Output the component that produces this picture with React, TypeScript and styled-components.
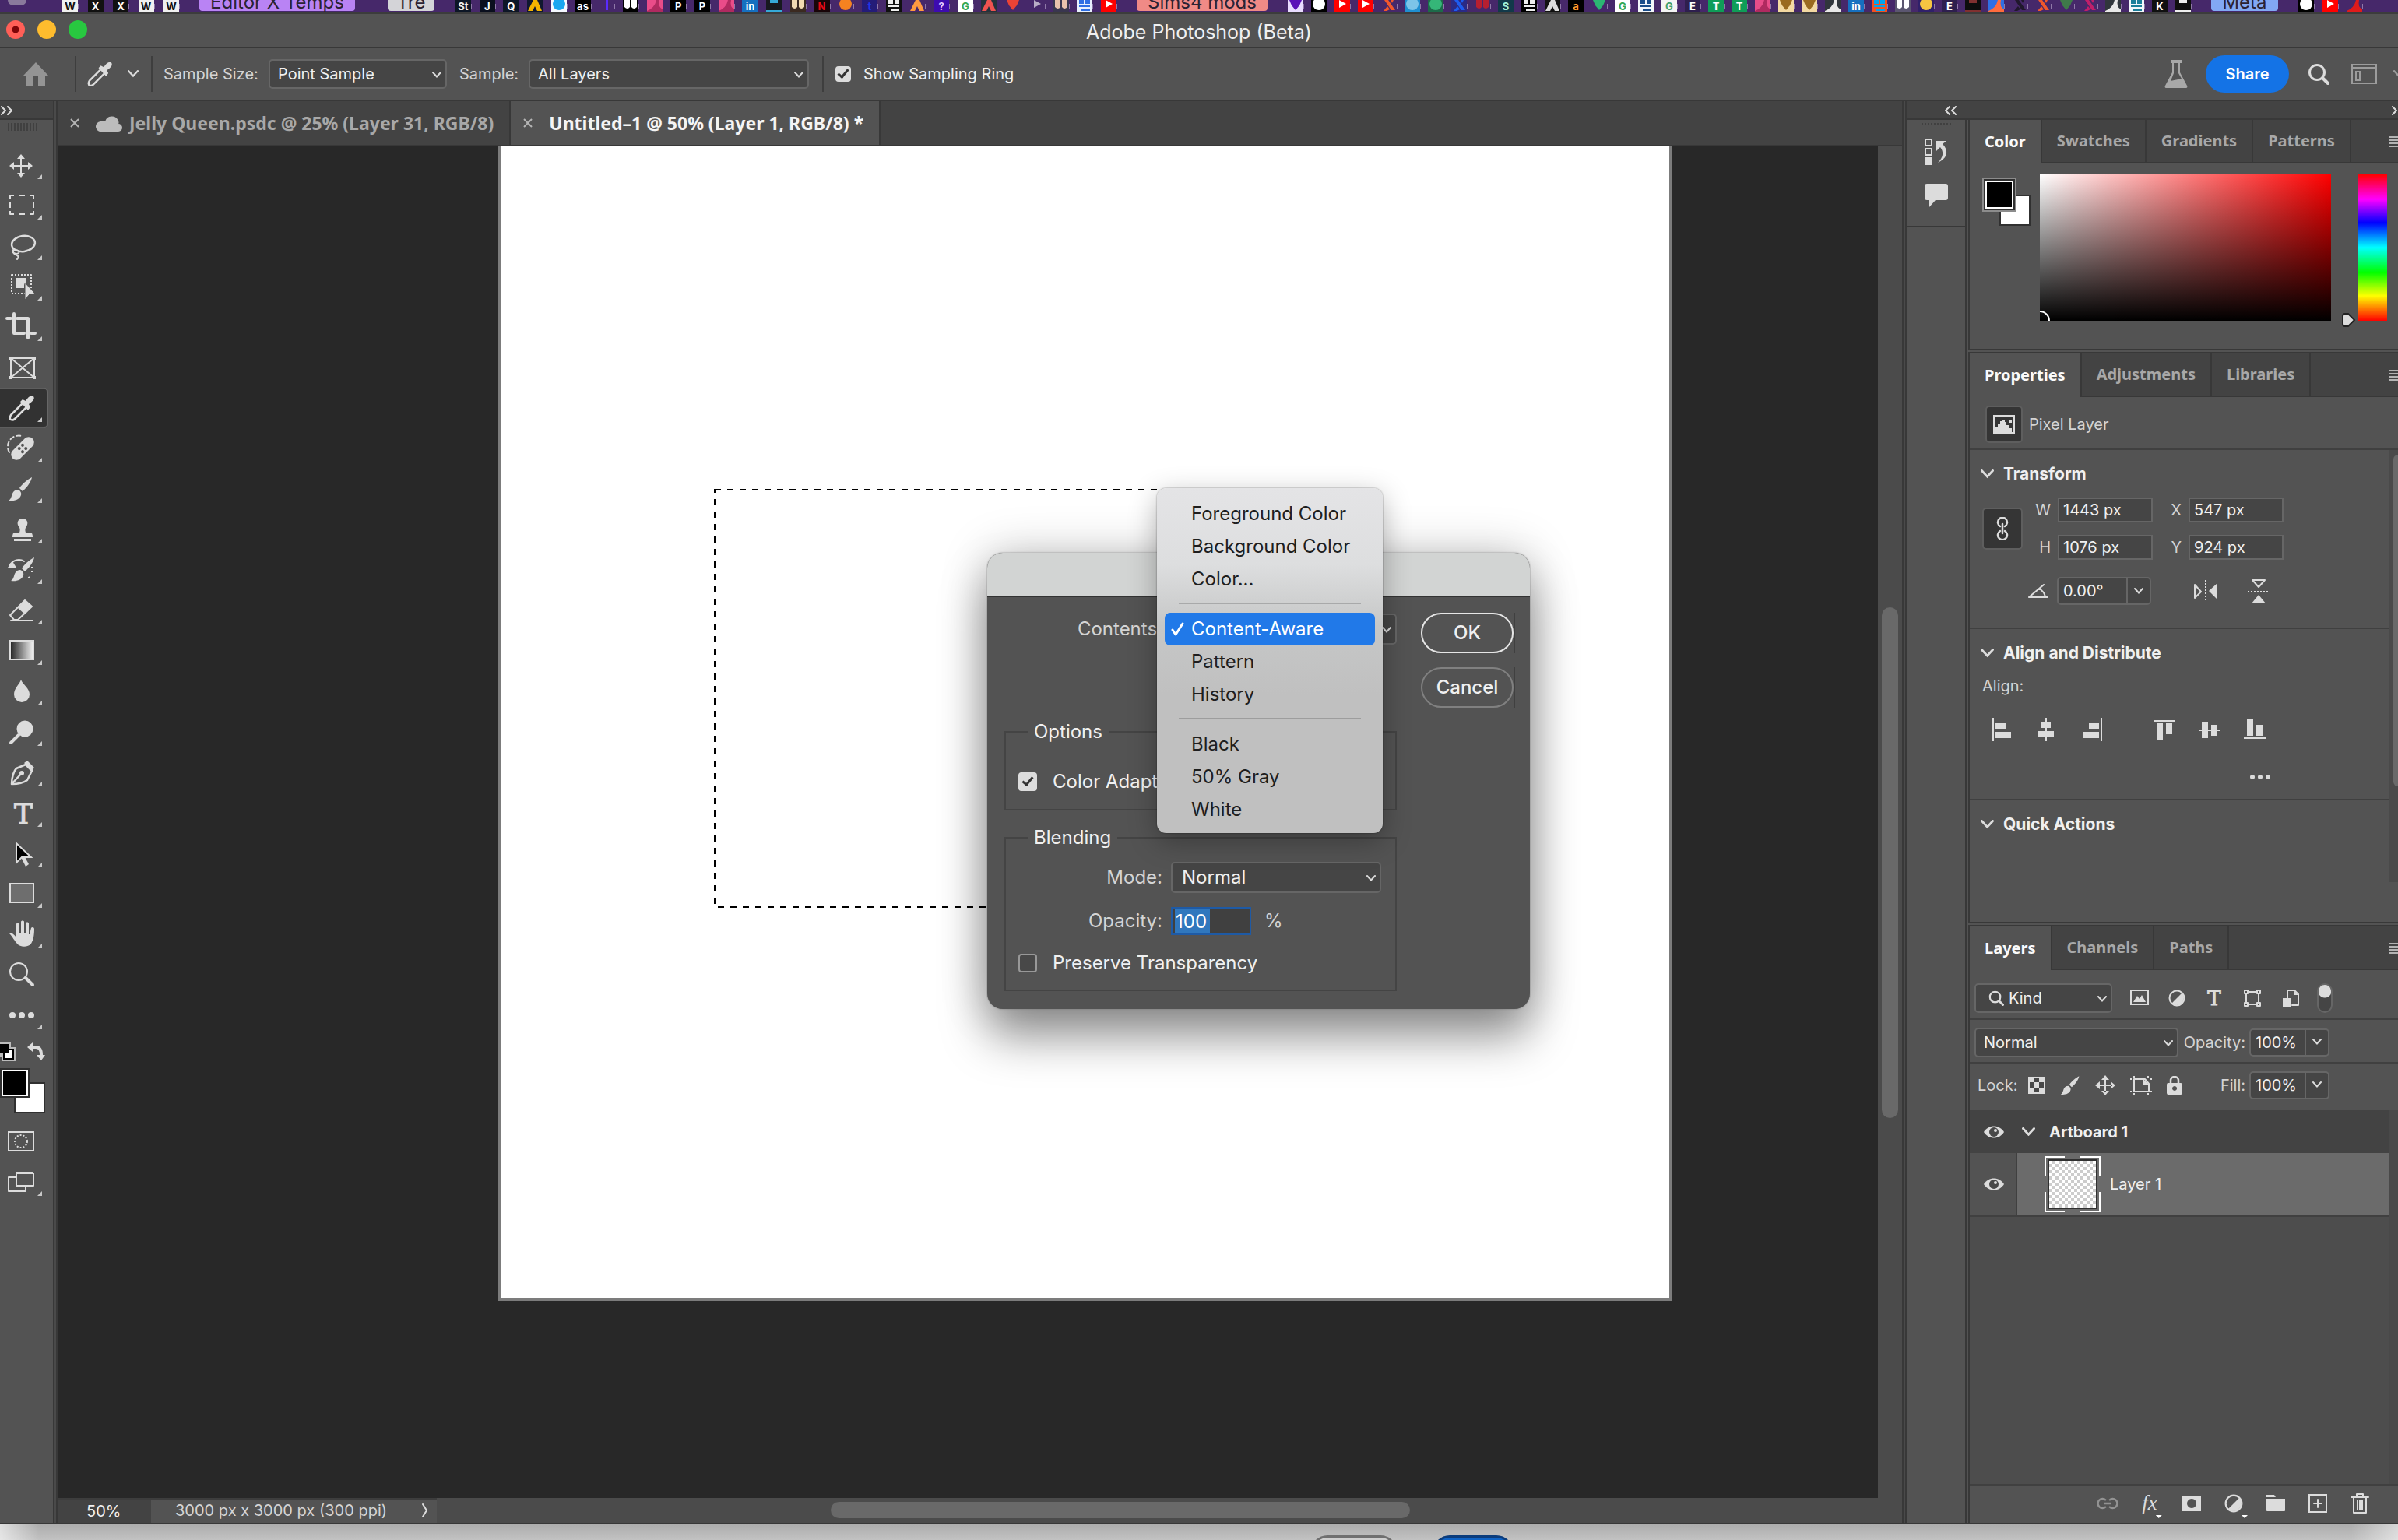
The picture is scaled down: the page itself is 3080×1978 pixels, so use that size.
import React from 'react';
import styled, { createGlobalStyle, css } from 'styled-components';

const sans = `Inter, "Liberation Sans", sans-serif`;
const tabFont = `"Noto Sans", "Open Sans", sans-serif`;

const c = {
  bar: '#535353',
  dark: '#434343',
  line: '#383838',
  field: '#454545',
  edge: '#666666',
  icon: '#dcdcdc',
  text: '#f0f0f0',
  soft: '#d4d4d4',
  dim: '#a8a8a8',
};

const Global = createGlobalStyle`
  *, *::before, *::after { box-sizing: border-box; }
  body { margin: 0; overflow: hidden; background: #b6b6b6; }
  button, input, select { font: inherit; color: inherit; margin: 0; }
  button { background: none; border: 0; padding: 0; display: block; }
  svg { display: block; flex: none; }
  fieldset, ul { margin: 0; padding: 0; }
`;

const Screen = styled.div`
  position: relative;
  display: flex;
  flex-direction: column;
  height: 100vh;
  overflow: hidden;
  font-family: ${sans};
  font-size: 20px;
  line-height: 26px;
  color: ${c.text};
`;

/* ---------- bookmark strip ---------- */
const Strip = styled.div`
  display: flex;
  height: 16px;
  flex: none;
  overflow: hidden;
  background: #46286a;
`;
const FavGroup = styled.div<{ $w: number; $gap: number }>`
  display: flex;
  justify-content: space-between;
  width: ${p => p.$w}px;
  margin-left: ${p => p.$gap}px;
  flex: none;
`;
const Fav = styled.div<{ $bg: string; $fg: string }>`
  width: 20px;
  height: 16px;
  background: ${p => p.$bg};
  color: ${p => p.$fg};
  font-weight: 700;
  font-size: 13px;
  line-height: 16px;
  text-align: center;
  box-shadow: 6px 0 0 -5px #8f79a8;
`;
const Folder = styled.div<{ $bg: string; $w: number; $gap: number }>`
  width: ${p => p.$w}px;
  margin-left: ${p => p.$gap}px;
  flex: none;
  height: 14px;
  border-radius: 0 0 4px 4px;
  background: ${p => p.$bg};
  color: #2b2233;
  font-size: 24px;
  line-height: 5px;
  text-align: center;
`;
const AvatarTip = styled.div`
  width: 24px;
  height: 7px;
  flex: none;
  margin-left: 10px;
  border-radius: 0 0 12px 12px;
  background: #8a7a9c;
`;

type F = [string, string, string];
const favA: F[] = [
  ['#f0f0f0', '#111', 'W'], ['#111', '#fff', 'X'], ['#111', '#fff', 'X'], ['#f0f0f0', '#111', 'W'], ['#f0f0f0', '#111', 'W'],
];
const favB: F[] = [
  ['#0d1626', '#eee', 'St'], ['#0a0f1e', '#fff', 'J'], ['#0d1626', '#fff', 'Q'], ['#101830', '#f4b400', 'tri'], ['#f5f9ff', '#1aa7f0', 'dot'],
  ['#000', '#fff', 'as'], ['#46286a', '#5a2bff', 'stem'], ['#000', '#fff', 'pair'], ['#e94c89', '#b02a60', 'wave'], ['#000', '#fff', 'P'],
  ['#000', '#fff', 'P'], ['#e94c89', '#b02a60', 'wave'], ['#1670c0', '#fff', 'in'], ['#17191f', '#35a9d8', 'base'], ['#3b2a20', '#f1d9b0', 'pair'],
  ['#180508', '#e50914', 'N'], ['#46286a', '#f58220', 'dot'], ['#241c78', '#1f35e8', 't'], ['#101010', '#eee', 'grid'], ['#46286a', '#ff9940', 'tri'],
  ['#3d0bb0', '#e6c9ff', '?'], ['#fff', '#34a853', 'G'], ['#25323c', '#ef5350', 'tri'], ['#46286a', '#ea4335', 'drop'], ['#46286a', '#b9adc6', 'play'],
  ['#39364f', '#e9c2ad', 'pair'], ['#e8f0fe', '#2f6fe4', 'grid'], ['#f00', '#fff', 'play'],
];
const favC: F[] = [
  ['#e9dcff', '#5a11b8', 'drop'], ['#000', '#fff', 'dot'], ['#f00', '#fff', 'play'], ['#f00', '#fff', 'play'], ['#46286a', '#f2572b', 'cross'],
  ['#1f8fd0', '#7cc4e8', 'dot'], ['#1d6b4a', '#35b678', 'dot'], ['#2a2a86', '#1d5cf0', 'cross'], ['#46286a', '#b81f30', 'pair'], ['#12394a', '#9ff0d8', 'S'],
  ['#000', '#eee', 'grid'], ['#111', '#ddd', 'tri'], ['#000', '#ff9d2e', 'a'], ['#46286a', '#2bb673', 'drop'], ['#fff', '#34a853', 'G'],
  ['#f2f6fa', '#1b4e8a', 'grid'], ['#f4f4f4', '#42a070', 'G'], ['#2e1f4e', '#fff', 'E'], ['#0f9d58', '#fff', 'T'], ['#0f9d58', '#fff', 'T'],
  ['#e94c89', '#b02a60', 'wave'], ['#f3d9a2', '#9a6a20', 'drop'], ['#f3d9a2', '#9a6a20', 'drop'], ['#30363c', '#e8e8e8', 'wave'], ['#1670c0', '#fff', 'in'],
  ['#f25022', '#00a4ef', 'grid'], ['#5b5670', '#fff', 'pair'], ['#30206a', '#f5c542', 'dot'], ['#2e1f4e', '#fff', 'E'], ['#0d0d0d', '#803030', 'base'],
  ['#2f6fe4', '#ff6b3d', 'wave'], ['#46286a', '#20182c', 'cross'], ['#46286a', '#f2572b', 'cross'], ['#46286a', '#3f7a4a', 'drop'], ['#46286a', '#c01f6a', 'cross'],
  ['#30363c', '#e8e8e8', 'wave'], ['#f2f6fa', '#1b7e9a', 'grid'], ['#101010', '#fff', 'K'], ['#101010', '#eee', 'base'],
];
const favD: F[] = [['#000', '#fff', 'dot'], ['#f00', '#fff', 'play'], ['#46286a', '#e01b1b', 'wave']];

const shapes: Record<string, React.ReactNode> = {
  tri: <path d="M8 0h5l6 14h-6l-3-6-3 6H1z" />,
  dot: <circle cx="10" cy="5" r="8" />,
  play: <path d="M6 0L15 5L6 10z" />,
  wave: <path d="M0 14Q10 10 12 0h4Q14 9 20 12V16H0z" />,
  stem: <path d="M9 0h3v13H9z" />,
  pair: <path d="M2 0h7v9q-3 4-7 0zM11 0h7v9q-4 4-7 0z" />,
  base: <path d="M0 13h20v3H0zM5 0h10v4H5z" />,
  grid: <path d="M3 0h6v5H3zM11 0h6v5h-6zM3 7h14v2H3zM6 11h11v3H6z" />,
  drop: <path d="M2 0h16l-3 7-5 6-5-6z" />,
  cross: <path d="M4 0h5l9 13h-5zM12 0h4l-2 4zM8 8l3 4-4 2H3z" />,
};
const Favs = ({ items }: { items: F[] }) => (
  <>
    {items.map(([bg, fg, g], i) => (
      <Fav key={i} $bg={bg} $fg={fg}>
        {shapes[g] ? <svg width="20" height="16" fill={fg}>{shapes[g]}</svg> : g}
      </Fav>
    ))}
  </>
);

/* ---------- window frame ---------- */
const Frame = styled.div`
  flex: 1;
  min-height: 0;
  display: flex;
  flex-direction: column;
  background: ${c.bar};
  border-top: 2px solid #3c3c3c;
  border-bottom: 2px solid ${c.line};
`;
const TitleBar = styled.header`
  position: relative;
  display: flex;
  align-items: center;
  justify-content: center;
  height: 44px;
  flex: none;
  padding-top: 3px;
  border-bottom: 2px solid ${c.line};
  font-size: 25px;
`;
const Lights = styled.div`
  position: absolute;
  left: 8px;
  top: 8px;
  display: flex;
  gap: 16px;
`;
const Light = styled.button<{ $c: string; $dot?: boolean }>`
  width: 24px;
  height: 24px;
  border-radius: 50%;
  background: ${p => p.$c};
  ${p => p.$dot && css`background: radial-gradient(circle, #7e0508 0 4px, ${p.$c} 5px);`}
`;

const OptionsBar = styled.div`
  display: flex;
  align-items: center;
  height: 68px;
  flex: none;
  padding-left: 30px;
  border-bottom: 2px solid ${c.line};
`;
const VLine = styled.i<{ $l: number; $r: number }>`
  width: 2px;
  height: 46px;
  margin: 0 ${p => p.$r}px 0 ${p => p.$l}px;
  background: #3e3e3e;
`;
const ToolPick = styled.button`
  display: flex;
  align-items: center;
  gap: 20px;
`;
const OptLabel = styled.label<{ $w: number; $l?: number }>`
  width: ${p => p.$w}px;
  padding-left: ${p => p.$l ?? 0}px;
  color: ${c.soft};
`;
const SelectBox = styled.span<{ $w?: number; $h?: number }>`
  position: relative;
  display: block;
  flex: none;
  width: ${p => p.$w}px;
  height: ${p => p.$h ?? 38}px;
  svg { position: absolute; right: 7px; top: 50%; margin-top: -3px; pointer-events: none; }
`;
const Select = styled.select<{ $pad?: number }>`
  appearance: none;
  width: 100%;
  height: 100%;
  padding: 0 0 0 ${p => p.$pad ?? 14}px;
  background: ${c.field};
  border: 2px solid ${c.edge};
  border-radius: 5px;
  color: ${c.text};
  outline: none;
`;
const Check = styled.label<{ $gap: number }>`
  display: flex;
  align-items: center;
  gap: ${p => p.$gap}px;
  white-space: nowrap;
  color: ${c.text};
`;
const Box = styled.input<{ $s: number }>`
  appearance: none;
  flex: none;
  width: ${p => p.$s}px;
  height: ${p => p.$s}px;
  border: 2px solid #989898;
  border-radius: 4px;
  background: #484848;
  display: grid;
  place-items: center;
  &:checked { background: #dcdcdc; border-color: #dcdcdc; }
  &:checked::before {
    content: '';
    width: 8px;
    height: 14px;
    margin-top: -4px;
    border: solid #333;
    border-width: 0 3px 3px 0;
    transform: rotate(40deg);
  }
`;
const OptRight = styled.div`
  display: flex;
  align-items: center;
  margin-left: auto;
`;
const Share = styled.button`
  width: 107px;
  height: 48px;
  margin: 0 24px 0 23px;
  border-radius: 24px;
  background: #1473e6;
  color: #fff;
  font-weight: 600;
`;
const WorkspaceButton = styled.button`
  margin-left: 28px;
`;
const Clipped = styled.span`
  width: 6px;
  margin-left: 21px;
  overflow: hidden;
`;

const Chevron = ({ s = 12, color = c.icon }: { s?: number; color?: string }) => (
  <svg width={s} height={s * 0.67} viewBox="0 0 12 8" fill="none" stroke={color} strokeWidth="2" strokeLinecap="round"><path d="M1 1 L6 6.5 L11 1" /></svg>
);

const Dropdown = ({ id, w, h, pad, value, options = [] }: { id: string; w: number; h?: number; pad?: number; value: string; options?: string[] }) => (
  <SelectBox $w={w} $h={h}>
    <Select id={id} $pad={pad} defaultValue={value}>
      {[value, ...options].map(o => <option key={o}>{o}</option>)}
    </Select>
    <Chevron />
  </SelectBox>
);

/* ---------- work area ---------- */
const Work = styled.div`
  flex: 1;
  min-height: 0;
  display: flex;
`;
const Tools = styled.nav`
  width: 74px;
  flex: none;
  border-right: 2px solid ${c.line};
  box-shadow: inset -2px 0 #4a4a4a, inset -4px 0 ${c.line};
  display: flex;
  flex-direction: column;
`;
const ToolsHead = styled.div`
  height: 24px;
  width: 68px;
  padding: 6px 0 0 1px;
  background: ${c.dark};
  border-bottom: 2px solid ${c.line};
`;
const Grip = styled.div<{ $l: number; $b: number }>`
  width: 40px;
  height: 10px;
  margin: 4px 0 ${p => p.$b}px ${p => p.$l}px;
  background: repeating-linear-gradient(90deg, #404040 0 2px, transparent 2px 4px);
`;
const Tool = styled.button<{ $on?: boolean; $sub?: boolean }>`
  position: relative;
  width: 62px;
  height: 52px;
  padding: 4px 6px;
  ${p => p.$on && css`
    background: #323232;
    box-shadow: inset -2px 0 #666, inset 0 2px #5e5e5e, inset 0 -2px #5e5e5e;
    border-radius: 0 5px 5px 0;
  `}
  ${p => p.$sub && css`
    &::after {
      content: '';
      position: absolute;
      right: 8px;
      bottom: 8px;
      width: 6px;
      height: 6px;
      background: #c8c8c8;
      clip-path: polygon(100% 0, 100% 100%, 0 100%);
    }
  `}
`;
const SwapRow = styled.div`
  display: flex;
  justify-content: space-between;
  width: 58px;
  height: 26px;
  margin: 9px 0 7px;
`;
const Swatches = styled.div<{ $s: number; $o: number; $mt?: number }>`
  position: relative;
  width: ${p => p.$s + p.$o}px;
  height: ${p => p.$s + p.$o}px;
  margin-top: ${p => p.$mt ?? 0}px;
  flex: none;
`;
const Swatch = styled.button<{ $s: number; $back?: boolean; $ring?: boolean }>`
  position: absolute;
  width: ${p => p.$s}px;
  height: ${p => p.$s}px;
  border: 2px solid #303030;
  ${p => p.$back
    ? css`right: 0; bottom: 0; background: #fff;`
    : css`left: 0; top: 0; background: #000; box-shadow: inset 0 0 0 2px #fff;`}
  ${p => p.$ring && css`outline: 2px solid #8c8c8c;`}
`;
const ModeTools = styled.div`
  margin-top: 10px;
`;

const Doc = styled.main`
  flex: 1;
  min-width: 0;
  display: flex;
  flex-direction: column;
`;
const DocTabs = styled.div`
  display: flex;
  height: 58px;
  flex: none;
  background: ${c.dark};
  border-bottom: 2px solid ${c.line};
  font: 700 23px/28px ${tabFont};
`;
const DocTab = styled.div<{ $on?: boolean }>`
  display: flex;
  align-items: center;
  gap: 21px;
  padding: 0 20px 0 16px;
  border-right: 2px solid ${c.line};
  color: ${p => (p.$on ? '#f4f4f4' : c.dim)};
  background: ${p => (p.$on ? c.bar : 'transparent')};
  white-space: nowrap;
`;
const DocName = styled.button`
  display: flex;
  align-items: center;
  gap: 9px;
`;
const View = styled.div`
  flex: 1;
  min-height: 0;
  display: flex;
`;
const Canvas = styled.div`
  position: relative;
  flex: 1;
  min-width: 0;
  overflow: hidden;
  background: #282828;
`;
const Artboard = styled.div`
  position: absolute;
  left: 566px;
  top: 0;
  width: 1508px;
  height: 1483px;
  background: #fff;
  border: solid #7c7c7c;
  border-width: 0 4px 4px 3px;
`;
const Ants = styled.svg`
  position: absolute;
  left: 843px;
  top: 440px;
`;
const VScroll = styled.div`
  width: 31px;
  padding: 592px 5px 0;
  background: #4b4b4b;
`;
const VThumb = styled.div`
  height: 656px;
  border-radius: 11px;
  background: #696969;
`;
const Status = styled.footer`
  display: flex;
  height: 32px;
  flex: none;
  background: #4b4b4b;
`;
const Zoom = styled.div`
  width: 120px;
  padding: 2px 0 0 37px;
  background: ${c.dark};
  border-top: 2px solid #3d3d3d;
`;
const DocSize = styled.button`
  display: flex;
  align-items: center;
  justify-content: space-between;
  width: 367px;
  padding: 0 11px 2px 31px;
  border-top: 2px solid #3d3d3d;
  background: ${c.bar};
  color: ${c.soft};
`;
const HTrack = styled.div`
  flex: 1;
  padding: 5px 0 0 506px;
`;
const HThumb = styled.div`
  width: 744px;
  height: 21px;
  border-radius: 11px;
  background: #696969;
`;

/* ---------- right side ---------- */
const Side = styled.aside`
  width: 637px;
  flex: none;
  display: flex;
  flex-direction: column;
  border-left: 2px solid ${c.line};
  box-shadow: inset 2px 0 #4a4a4a, inset 4px 0 ${c.line};
  padding-left: 5px;
`;
const SideHead = styled.div`
  display: flex;
  justify-content: space-between;
  height: 24px;
  flex: none;
  padding: 6px 0 0 48px;
  background: ${c.dark};
  border-bottom: 2px solid ${c.line};
`;
const SideBody = styled.div`
  flex: 1;
  min-height: 0;
  display: flex;
`;
const Dock = styled.div`
  width: 76px;
  flex: none;
  border-right: 2px solid ${c.line};
`;
const DockGroup = styled.div`
  display: flex;
  flex-direction: column;
  height: 138px;
  border-bottom: 2px solid ${c.line};
`;
const DockButton = styled.button`
  padding: 0 0 0 21px;
  margin-bottom: 24px;
`;
const Panels = styled.div`
  flex: 1;
  min-width: 0;
  display: flex;
  flex-direction: column;
  gap: 2px;
  margin-left: 2px;
`;
const Panel = styled.section<{ $h?: number }>`
  display: flex;
  flex-direction: column;
  ${p => (p.$h ? css`height: ${p.$h}px; flex: none; border-bottom: 2px solid ${c.line};` : css`flex: 1; min-height: 0;`)}
  border-left: 2px solid ${c.line};
  & + & { border-top: 2px solid ${c.line}; }
`;
const TabBar = styled.div`
  display: flex;
  height: 56px;
  flex: none;
  font: 700 20px/26px ${tabFont};
`;
const PanelTab = styled.button<{ $on?: boolean }>`
  padding: 0 19px;
  color: ${p => (p.$on ? '#fafafa' : c.dim)};
  background: ${p => (p.$on ? 'transparent' : c.dark)};
  border-right: 2px solid ${c.line};
  border-bottom: ${p => (p.$on ? 'none' : `2px solid ${c.line}`)};
`;
const TabRest = styled.div`
  flex: 1;
  display: flex;
  justify-content: flex-end;
  padding-top: 21px;
  background: ${c.dark};
  border-bottom: 2px solid ${c.line};
`;
const Burger = () => (
  <svg width="12" height="16" fill="#b4b4b4"><path d="M0 0h12v2H0zM0 4h12v2H0zM0 8h12v2H0zM0 12h12v2H0z" /></svg>
);
const Tabs = ({ names }: { names: string[] }) => (
  <TabBar role="tablist">
    {names.map((n, i) => <PanelTab key={n} role="tab" aria-selected={i === 0} $on={i === 0}>{n}</PanelTab>)}
    <TabRest><Burger /></TabRest>
  </TabBar>
);

const ColorBody = styled.div`
  display: flex;
  padding: 14px 0 0 18px;
`;
const Field = styled.div`
  position: relative;
  flex: 1;
  height: 188px;
  margin-left: 12px;
  overflow: hidden;
  background: linear-gradient(to top, #000, transparent), linear-gradient(to right, #fff, #f00);
`;
const FieldRing = styled.i`
  position: absolute;
  left: -13px;
  bottom: -13px;
  width: 26px;
  height: 26px;
  border: 2px solid #fff;
  border-radius: 50%;
`;
const HueWrap = styled.div`
  position: relative;
  width: 38px;
  height: 188px;
  margin: 0 14px 0 34px;
  background: linear-gradient(#f00, #f0f 17%, #00f 33%, #0ff 50%, #0f0 67%, #ff0 83%, #f00);
  svg { position: absolute; left: -21px; bottom: -9px; }
`;

const PropHead = styled.div`
  display: flex;
  align-items: center;
  gap: 8px;
  height: 68px;
  flex: none;
  padding: 4px 0 0 20px;
  color: ${c.soft};
  border-bottom: 2px solid #404040;
`;
const Inset = styled.button<{ $h: number; $w: number }>`
  display: grid;
  place-items: center;
  width: ${p => p.$w}px;
  height: ${p => p.$h}px;
  background: #353535;
  border: 2px solid #5e5e5e;
  border-radius: 5px;
`;
const PropScroll = styled.div`
  flex: 1;
  display: flex;
  min-height: 0;
`;
const PropList = styled.div`
  flex: 1;
`;
const PropTrack = styled.div`
  width: 12px;
  height: 555px;
  padding: 6px 0 0 6px;
  background: #4a4a4a;
`;
const PropThumb = styled.div`
  height: 426px;
  background: #696969;
  border-radius: 6px 0 0 6px;
`;
const Group = styled.div<{ $h?: number }>`
  height: ${p => (p.$h ? `${p.$h}px` : 'auto')};
  padding: 18px 0 0 14px;
  border-bottom: ${p => (p.$h ? '2px solid #404040' : 'none')};
`;
const GroupHead = styled.button`
  display: flex;
  align-items: center;
  gap: 12px;
  font-size: 21px;
  font-weight: 700;
`;
const XForm = styled.div`
  display: flex;
  align-items: center;
  margin: 17px 0 0 2px;
`;
const XGrid = styled.div`
  display: grid;
  grid-template-columns: 36px 122px 28px 122px;
  column-gap: 9px;
  row-gap: 16px;
  align-items: center;
  color: ${c.soft};
  label { text-align: right; }
`;
const NumField = styled.input`
  width: 100%;
  height: 32px;
  padding: 0 0 0 5px;
  background: ${c.field};
  border: 2px solid ${c.edge};
  color: ${c.text};
  outline: none;
`;
const AngleRow = styled.div`
  display: flex;
  align-items: center;
  margin: 22px 0 0 61px;
`;
const Combo = styled.div<{ $w: number }>`
  display: flex;
  width: ${p => p.$w}px;
  height: 36px;
  flex: none;
  background: ${c.field};
  border: 2px solid ${c.edge};
  border-radius: 5px;
  color: ${c.text};
`;
const ComboInput = styled.input`
  flex: 1;
  min-width: 0;
  padding: 0 0 0 6px;
  background: none;
  border: 0;
  outline: none;
`;
const ComboButton = styled.button`
  display: grid;
  place-items: center;
  width: 30px;
  border-left: 2px solid ${c.edge};
`;
const ComboField = ({ id, w, value }: { id: string; w: number; value: string }) => (
  <Combo $w={w}>
    <ComboInput id={id} aria-label={id} defaultValue={value} />
    <ComboButton aria-label={`${id} options`}><Chevron /></ComboButton>
  </Combo>
);
const Flip = styled.button<{ $l: number }>`
  margin-left: ${p => p.$l}px;
`;
const AlignLabel = styled.div`
  margin: 16px 0 0 2px;
  color: ${c.soft};
`;
const AlignRow = styled.div`
  display: grid;
  grid-template-columns: repeat(3, 58px) 33px repeat(3, 58px);
  margin: 28px 0 0 15px;
`;
const More = styled.button`
  margin: 42px 0 0 345px;
`;

const FilterRow = styled.div<{ $h: number; $end?: boolean; $top?: number; $bottom?: number }>`
  display: flex;
  align-items: center;
  height: ${p => p.$h}px;
  flex: none;
  padding: ${p => p.$top ?? 0}px 0 ${p => p.$bottom ?? 0}px 6px;
  border-bottom: ${p => (p.$end ? 'none' : '2px solid #404040')};
  color: ${c.soft};
`;
const KindBox = styled.div`
  position: relative;
`;
const KindIcon = styled.span`
  position: absolute;
  left: 18px;
  top: 9px;
  pointer-events: none;
`;
const IconSet = styled.div<{ $gap: number; $l: number }>`
  display: flex;
  align-items: center;
  gap: ${p => p.$gap}px;
  margin-left: ${p => p.$l}px;
`;
const Toggle = styled.button`
  width: 20px;
  height: 38px;
  margin-left: 22px;
  border: 2px solid ${c.edge};
  border-radius: 10px;
  background: radial-gradient(circle at 8px 8px, #dcdcdc 0 8px, #454545 9px);
`;
const LockLabel = styled.span`
  width: 69px;
  padding-left: 4px;
`;
const FieldLabel = styled.label<{ $w: number }>`
  width: ${p => p.$w}px;
  margin-right: 5px;
  text-align: right;
`;
const LayerList = styled.div`
  flex: 1;
  min-height: 0;
  margin-right: 12px;
  background: #4d4d4d;
  box-shadow: 12px 0 #494949;
`;
const ArtRow = styled.div`
  display: flex;
  align-items: center;
  height: 55px;
  padding-left: 18px;
  background: ${c.dark};
  font-weight: 700;
`;
const ArtName = styled.button`
  display: flex;
  align-items: center;
  gap: 18px;
  margin-left: 23px;
`;
const LayerRow = styled.div`
  display: flex;
  height: 82px;
  border-bottom: 2px solid #404040;
`;
const EyeCell = styled.button`
  width: 61px;
  flex: none;
  padding-left: 18px;
  background: ${c.bar};
  border-right: 2px solid #404040;
`;
const LayerCell = styled.div`
  flex: 1;
  display: flex;
  align-items: center;
  gap: 12px;
  padding-left: 35px;
  background: #6b6b6b;
`;
const Thumb = styled.div`
  position: relative;
  width: 72px;
  height: 72px;
  padding: 4px;
  &::before {
    content: '';
    display: block;
    width: 64px;
    height: 64px;
    border: 2px solid #303030;
    background: repeating-conic-gradient(#ccc 0 25%, #fff 0 50%) 0 0 / 8px 8px;
  }
  svg { position: absolute; inset: 0; }
`;
const LayerFoot = styled.div`
  display: grid;
  grid-template-columns: repeat(7, 54px);
  place-items: center;
  justify-content: flex-end;
  height: 50px;
  flex: none;
  padding: 0 22px 2px 0;
  border-top: 2px solid #404040;
`;
const FootButton = styled.button<{ $menu?: boolean }>`
  position: relative;
  ${p => p.$menu && css`
    &::after {
      content: '';
      position: absolute;
      right: -6px;
      bottom: -7px;
      width: 8px;
      height: 4px;
      background: #fff;
      clip-path: polygon(0 0, 100% 0, 50% 100%);
    }
  `}
`;
const FxMark = styled.span`
  display: block;
  height: 24px;
  font: italic 27px/22px "Liberation Serif", serif;
  color: ${c.icon};
`;

/* ---------- dialog ---------- */
const Dialog = styled.form`
  position: absolute;
  left: 1268px;
  top: 710px;
  width: 697px;
  height: 586px;
  border-radius: 20px;
  background: ${c.bar};
  box-shadow: 0 0 2px #777, 0 36px 60px rgba(0, 0, 0, 0.4), 0 0 60px rgba(0, 0, 0, 0.22);
  font-size: 24px;
  line-height: 30px;
`;
const DialogBar = styled.div`
  height: 57px;
  background: #d2d4d3;
  border-bottom: 2px solid #333;
  border-radius: 20px 20px 0 0;
`;
const DialogBody = styled.div`
  display: flex;
  gap: 31px;
  padding: 20px 19px 0 22px;
`;
const DialogMain = styled.div`
  flex: 1;
`;
const ContentRow = styled.div`
  display: flex;
  align-items: center;
  justify-content: flex-end;
  gap: 11px;
  padding-top: 1px;
  color: ${c.soft};
`;
const DialogButtons = styled.div`
  display: flex;
  flex-direction: column;
  gap: 18px;
  width: 121px;
`;
const Pill = styled.button<{ $main?: boolean }>`
  height: 52px;
  border: 2px solid ${p => (p.$main ? '#e6e6e6' : '#808080')};
  border-radius: 26px;
  margin-right: 2px;
  font-weight: 500;
`;
const PillSlot = styled.div`
  border-right: 2px solid #404040;
  ${Pill} { width: 119px; }
`;
const Box2 = styled.fieldset<{ $h: number; $mt: number }>`
  height: ${p => p.$h}px;
  margin-top: ${p => p.$mt}px;
  padding: 0 18px 0 16px;
  border: 2px solid #444;
  legend { margin-left: 12px; padding: 0 8px; height: 30px; }
`;
const FormRow = styled.div<{ $mt: number }>`
  display: flex;
  align-items: center;
  gap: 11px;
  margin-top: ${p => p.$mt}px;
  color: ${c.soft};
  label:first-child { width: 185px; text-align: right; }
`;
const OpacityInput = styled.input`
  width: 103px;
  height: 36px;
  padding: 0 0 0 4px;
  border: 2px solid #1e5aa5;
  background: linear-gradient(#3077bd, #3077bd) 3px 1px / 45px 30px no-repeat, #404040;
  color: #fff;
  outline: none;
`;
const Unit = styled.span`
  padding-left: 6px;
`;
const CheckRow = styled.div<{ $mt: number }>`
  margin-top: ${p => p.$mt}px;
`;

const Menu = styled.ul`
  position: absolute;
  left: 1486px;
  top: 627px;
  width: 290px;
  padding: 12px 10px 9px;
  list-style: none;
  border-radius: 12px;
  background: linear-gradient(#e4e4e6 0, #dddedf 22%, #c6c7c7 40%, #c0c0c0 60%);
  box-shadow: 0 0 2px rgba(0, 0, 0, 0.5), 0 10px 36px rgba(0, 0, 0, 0.3);
  color: #1e1e1e;
  font-size: 24px;
`;
const Item = styled.button<{ $on?: boolean }>`
  position: relative;
  width: 100%;
  height: 42px;
  padding-left: 34px;
  text-align: left;
  border-radius: 7px;
  ${p => p.$on && css`background: #2179e8; color: #fff;`}
  svg { position: absolute; left: 8px; top: 11px; }
`;
const MenuLine = styled.li`
  height: 22px;
  padding: 9px 18px 0;
  &::before { content: ''; display: block; height: 2px; background: rgba(0, 0, 0, 0.18); }
`;

/* ---------- window behind ---------- */
const Behind = styled.div`
  display: flex;
  gap: 45px;
  height: 20px;
  flex: none;
  padding: 14px 0 0 1683px;
  overflow: hidden;
  background: linear-gradient(90deg, rgba(255, 255, 255, 0.6), transparent 50px), linear-gradient(270deg, rgba(255, 255, 255, 0.5), transparent 60px), linear-gradient(#adadad, #c2c2c2);
`;
const BehindPill = styled.div<{ $bg: string; $b: string; $w: number }>`
  width: ${p => p.$w}px;
  height: 44px;
  flex: none;
  border: 3px solid ${p => p.$b};
  border-radius: 22px;
  background: ${p => p.$bg};
`;

/* ---------- tool drawings, on a 44 x 44 grid ---------- */
const G = ({ children }: { children: React.ReactNode }) => (
  <svg width="44" height="44" viewBox="0 0 44 44" fill={c.icon}>{children}</svg>
);
const ln = { fill: 'none', stroke: c.icon, strokeWidth: 2, strokeLinecap: 'round' as const, strokeLinejoin: 'round' as const };
const brushPath = 'M35 7 C29 10 22 16 19 21 L23 25 C28 21 34 13 35 7 Z M17 23 C12 23 10 27 9 31 C8 34 7 36 5 37 C12 38 19 36 21 30 C22 27 20 24 17 23 Z';

const tools: { name: string; sub?: boolean; on?: boolean; art: React.ReactNode }[] = [
  { name: 'Move', sub: true, art: <><path d="M20 12h2v20h-2zM10 22h22v2H10z" /><path d="M21 8l5 6H16zM21 38l5-6H16zM6 23l6-5v10zM36 23l-6-5v10z" /></> },
  { name: 'Rectangular Marquee', sub: true, art: <path d="M7 14v-5h5M18 9h8M32 9h5v5M37 18v7M37 29v4h-5M26 33h-8M12 33H7v-4M7 25v-7" {...ln} strokeLinecap="butt" /> },
  { name: 'Lasso', sub: true, art: <><ellipse cx="24" cy="19" rx="15" ry="10" transform="rotate(-8 24 19)" {...ln} strokeWidth="2.5" /><path d="M11 27c-3 4 4 6 7 4c2-2-2-5-6-3c-3 2 1 5 4 6c2 1 2 3 0 5" {...ln} /></> },
  { name: 'Object Selection', sub: true, art: <><path d="M9 7h25v24H9z" {...ln} strokeLinecap="butt" strokeDasharray="2 2" /><path d="M14 11h14v4l-3 5v4H14z" /><path d="M26 17l13 14-7 1-6 7z" stroke={c.bar} strokeWidth="1" /></> },
  { name: 'Crop', sub: true, art: <path d="M3 11h5M12 5v25h13M16 11h14v25M34 30h5" {...ln} strokeWidth="4" /> },
  { name: 'Frame', art: <><path d="M8 10h30v25H8zM8 10l30 25M38 10L8 35" {...ln} /><path d="M6 8h4v4H6zM36 8h4v4h-4zM6 33h4v4H6zM36 33h4v4h-4z" /></> },
  { name: 'Eyedropper', sub: true, on: true, art: <><path d="M23 16L8 31c-2 3-1 6 0 6c2 1 4 0 5-1L28 21" {...ln} strokeWidth="2.5" /><path d="M20 14l3-3 4 2c3-5 7-8 10-6c2 3 0 6-6 10l2 4-3 4z" /></> },
  { name: 'Healing Brush', sub: true, art: <><g transform="rotate(-45 23 22)"><rect x="5" y="15" width="36" height="14" rx="7" /><g fill={c.bar}><circle cx="20" cy="19" r="2" /><circle cx="26" cy="19" r="2" /><circle cx="20" cy="25" r="2" /><circle cx="26" cy="25" r="2" /></g></g><path d="M6 27C0 17 8 3 22 6" {...ln} strokeDasharray="5 4" /></> },
  { name: 'Brush', sub: true, art: <path d={brushPath} /> },
  { name: 'Clone Stamp', sub: true, art: <><path d="M23 8c6 0 8 6 5 10c-2 3-2 5-1 8h6c2 0 3 2 3 6H10c0-4 1-6 3-6h6c1-3 1-5-1-8c-3-4-1-10 5-10z" /><path d="M12 34h22v3H12z" /></> },
  { name: 'History Brush', sub: true, art: <><path d={brushPath} transform="translate(3 -1)" /><path d="M6 17c4-8 13-10 19-6" {...ln} /><path d="M4 19l6-8 5 8z" /><path d="M35 18v10M32 31l-4 3" {...ln} strokeLinecap="butt" strokeDasharray="2 3" /></> },
  { name: 'Eraser', sub: true, art: <><path d="M7 28L26 9l9 8-18 17h-5z" {...ln} /><path d="M17 19L26 9l9 8-9 10z" /><path d="M8 35h28" {...ln} /></> },
  { name: 'Gradient', sub: true, art: <><defs><linearGradient id="toolGradient"><stop offset="0" stopColor="#222" /><stop offset="1" stopColor="#f4f4f4" /></linearGradient></defs><path d="M7 9h30v24H7z" {...ln} strokeLinejoin="miter" fill="url(#toolGradient)" /></> },
  { name: 'Blur', sub: true, art: <path d="M21 7c2 6 11 11 11 19a10 10 0 0 1-20 0C12 18 19 13 21 7z" /> },
  { name: 'Dodge', sub: true, art: <><circle cx="26" cy="18" r="10.5" /><path d="M18 26L8 36" {...ln} strokeWidth="4" /></> },
  { name: 'Pen', sub: true, art: <><path d="M9 37c0-9 3-17 6-20l12-5 8 8-6 12c-4 3-11 5-20 5zM9 37l12-13" {...ln} strokeWidth="2.5" /><circle cx="22" cy="23" r="3" /><path d="M25 10l4-3 9 9-3 4z" /></> },
  { name: 'Type', sub: true, art: <text x="24" y="36" fontFamily="'DejaVu Serif', serif" fontSize="36" textAnchor="middle" stroke={c.icon}>T</text> },
  { name: 'Path Selection', sub: true, art: <><path d="M15 9v25l7-7h12z" fill="#000" stroke={c.icon} strokeWidth="2" /><path d="M21 27l4-2 6 11-4 3z" /></> },
  { name: 'Rectangle', sub: true, art: <path d="M7 9h30v24H7z" {...ln} strokeLinejoin="miter" fill="#6e6e6e" /> },
  { name: 'Hand', sub: true, art: <path d="M6 21c2-2 5 0 9 5V9c0-2 4-2 4 0v11h2V6c0-2 4-2 4 0v14h2V8c0-2 4-2 4 0v14h1l2-8c1-2 4-1 4 1c0 8-1 14-4 19c-4 5-14 5-18 0C13 31 10 25 6 21z" /> },
  { name: 'Zoom', art: <><circle cx="18" cy="18" r="11" {...ln} /><path d="M27 26l9 9" {...ln} strokeWidth="4" /></> },
  { name: 'Edit Toolbar', sub: true, art: <><circle cx="10" cy="22" r="4" /><circle cx="22" cy="22" r="4" /><circle cx="34" cy="22" r="4" /></> },
];

const Magnifier = ({ s }: { s: number }) => (
  <svg width={s} height={s} viewBox="0 0 28 28" fill="none" stroke={c.icon} strokeLinecap="round"><circle cx="12" cy="12" r="9.5" strokeWidth="3" /><path d="M19 19l7 7" strokeWidth="4" /></svg>
);
const Cross = () => (
  <svg width="12" height="12" stroke="#b4b4b4" strokeWidth="2"><path d="M1 1l10 10M11 1L1 11" /></svg>
);
const Eye = () => (
  <svg width="26" height="18" viewBox="0 0 26 18"><path d="M0 9C6-1 20-1 26 9C20 19 6 19 0 9z" fill={c.icon} /><circle cx="13" cy="9" r="6" fill="#484848" /><circle cx="15" cy="7" r="2" fill={c.icon} /></svg>
);
const HalfCircle = ({ s = 22 }: { s?: number }) => (
  <svg width={s} height={s} viewBox="0 0 22 22"><circle cx="11" cy="11" r="9.5" fill="none" stroke={c.icon} strokeWidth="2" /><path d="M17.700 4.300A9.500 9.500 0 0 1 4.300 17.700z" fill={c.icon} /></svg>
);
const Arrows = ({ s }: { s: number }) => (
  <svg width={s} height={s} viewBox="0 0 26 26" fill={c.icon}><path d="M12 4h2v18h-2zM4 12h18v2H4zM13 0l5 6H8zM13 26l5-6H8zM0 13l6-5v10zM26 13l-6-5v10z" /></svg>
);
const SmallBrush = () => (
  <svg width="26" height="28" viewBox="4 6 33 32" fill={c.icon}><path d={brushPath} /></svg>
);

const bars: Record<string, string> = {
  left: 'M0 0h2v30H0zM4 6h13v8H4zM4 18h20v8H4z',
  center: 'M10 0h2v30h-2zM5 5h12v8H5zM1 17h20v8H1z',
  right: 'M23 0h2v30h-2zM8 6h13v8H8zM1 18h20v8H1z',
  top: 'M0 3h28v2H0zM4 7h8v21H4zM16 7h8v14h-8z',
  middle: 'M0 15h28v2H0zM4 5h8v21H4zM16 9h8v14h-8z',
  bottom: 'M0 25h28v2H0zM4 2h8v21H4zM16 9h8v14h-8z',
};
const AlignButton = ({ kind }: { kind: string }) => (
  <button aria-label={`Align ${kind}`}><svg width="28" height="30" fill={c.icon}><path d={bars[kind]} /></svg></button>
);

const menuItems = ['Foreground Color', 'Background Color', 'Color...', '-', 'Content-Aware', 'Pattern', 'History', '-', 'Black', '50% Gray', 'White'];

export default function App() {
  return (
    <Screen>
      <Global />
      <Strip>
        <AvatarTip />
        <FavGroup $w={150} $gap={46}><Favs items={favA} /></FavGroup>
        <Folder $bg="#b983f4" $w={200} $gap={26}>Editor X Temps</Folder>
        <Folder $bg="#d4d4d8" $w={60} $gap={42}>Tre</Folder>
        <FavGroup $w={849} $gap={27}><Favs items={favB} /></FavGroup>
        <Folder $bg="#f08a86" $w={168} $gap={26}>Sims4 mods</Folder>
        <FavGroup $w={1160} $gap={26}><Favs items={favC} /></FavGroup>
        <Folder $bg="#82a8f4" $w={86} $gap={26}>Meta</Folder>
        <FavGroup $w={82} $gap={26}><Favs items={favD} /></FavGroup>
      </Strip>

      <Frame>
        <TitleBar>
          <Lights>
            <Light $c="#ff5f57" $dot aria-label="Close" />
            <Light $c="#febc2e" aria-label="Minimize" />
            <Light $c="#28c840" aria-label="Zoom window" />
          </Lights>
          Adobe Photoshop (Beta)
        </TitleBar>

        <OptionsBar>
          <button aria-label="Home"><svg width="32" height="30" fill="#949494"><path d="M16 0L32 17H28V30H19V17H13V30H4V17H0z" /></svg></button>
          <VLine $l={34} $r={14} />
          <ToolPick aria-label="Current tool">
            <svg width="32" height="32" viewBox="5 6 33 32" fill={c.icon}>{tools[6].art}</svg>
            <Chevron s={14} />
          </ToolPick>
          <VLine $l={16} $r={14} />
          <OptLabel $w={135} htmlFor="size">Sample Size:</OptLabel>
          <Dropdown id="size" w={229} value="Point Sample" pad={10} options={['3 by 3 Average']} />
          <OptLabel $w={105} $l={16} htmlFor="sample">Sample:</OptLabel>
          <Dropdown id="sample" w={360} value="All Layers" pad={10} options={['Current Layer']} />
          <VLine $l={17} $r={15} />
          <Check $gap={16}><Box $s={20} type="checkbox" defaultChecked />Show Sampling Ring</Check>
          <OptRight>
            <svg width="30" height="36" fill="#a8a8a8"><path d="M8 0h14v4H8zM10 4v12L1 33c-1 2 0 3 2 3h24c2 0 3-1 2-3L20 16V4h-2v13l4 7-14 3 4-10V4z" /></svg>
            <Share>Share</Share>
            <button aria-label="Search"><Magnifier s={28} /></button>
            <WorkspaceButton aria-label="Workspace"><svg width="33" height="28" fill="none" stroke="#9c9c9c" strokeWidth="2"><path d="M1 2h31v24H1zM1 6h31" /><path d="M6 11h5v11H6z" /></svg></WorkspaceButton>
            <Clipped><Chevron s={14} color="#9c9c9c" /></Clipped>
          </OptRight>
        </OptionsBar>

        <Work>
          <Tools aria-label="Tools">
            <ToolsHead><svg width="16" height="12" {...ln}><path d="M1 1l5 5-5 5M9 1l5 5-5 5" /></svg></ToolsHead>
            <Grip $l={10} $b={18} />
            {tools.map(t => <Tool key={t.name} aria-label={t.name} $on={t.on} $sub={t.sub}><G>{t.art}</G></Tool>)}
            <SwapRow>
              <svg width="20" height="24"><path d="M0 0h14v6h6v18H2v-6H0z" fill="#bbb" /><path d="M4 8h14v14H4z" /><path d="M6 10h10v10H6z" fill="#fff" /><path d="M0 2h12v12H0z" /></svg>
              <svg width="24" height="24" fill={c.icon}><path d="M6 6h6q7 0 7 10" fill="none" stroke={c.icon} strokeWidth="4" /><path d="M1 6l7-6v12zM19 23l-6-7h11z" /></svg>
            </SwapRow>
            <Swatches $s={40} $o={18}>
              <Swatch $s={40} $back aria-label="Background colour" />
              <Swatch $s={38} aria-label="Foreground colour" />
            </Swatches>
            <ModeTools>
              <Tool aria-label="Quick Mask"><G><path d="M5 10h32v24H5z" {...ln} strokeLinejoin="miter" /><circle cx="21" cy="22" r="8" {...ln} strokeLinecap="butt" strokeDasharray="2 2" /></G></Tool>
              <Tool aria-label="Screen Mode" $sub><G><path d="M5 16h22v18H5z" {...ln} /><path d="M15 11h22v16H15z" {...ln} fill={c.bar} /><path d="M5 14h9v3H5zM15 9h22v3H15z" /></G></Tool>
            </ModeTools>
          </Tools>

          <Doc>
            <DocTabs role="tablist">
              <DocTab>
                <button aria-label="Close Jelly Queen"><Cross /></button>
                <DocName role="tab">
                  <svg width="34" height="24" fill="#bcbcbc"><path d="M7 23a6 6 0 0 1-1-13q4-2 6 0a9 9 0 0 1 17-1q1 3 0 4a5 5 0 0 1 0 10z" /></svg>
                  Jelly Queen.psdc @ 25% (Layer 31, RGB/8)
                </DocName>
              </DocTab>
              <DocTab $on>
                <button aria-label="Close Untitled"><Cross /></button>
                <DocName role="tab" aria-selected>Untitled–1 @ 50% (Layer 1, RGB/8) *</DocName>
              </DocTab>
            </DocTabs>
            <View>
              <Canvas>
                <Artboard />
                <Ants width="724" height="540" fill="none" stroke="#000" strokeWidth="2"><path d="M1 1H723V537H1z" strokeDasharray="8 8" /></Ants>
              </Canvas>
              <VScroll><VThumb /></VScroll>
            </View>
            <Status>
              <Zoom>50%</Zoom>
              <DocSize>3000 px x 3000 px (300 ppi)<svg width="8" height="18" {...ln}><path d="M1 1l5 8-5 8" /></svg></DocSize>
              <HTrack><HThumb /></HTrack>
            </Status>
          </Doc>

          <Side>
            <SideHead>
              <svg width="16" height="12" {...ln}><path d="M6 1L1 6l5 5M14 1L9 6l5 5" /></svg>
              <svg width="8" height="12" {...ln}><path d="M1 1l5 5-5 5" /></svg>
            </SideHead>
            <SideBody>
              <Dock>
                <DockGroup>
                  <Grip $l={18} $b={18} />
                  <DockButton aria-label="History"><svg width="32" height="34" fill={c.icon}><path d="M2 1h8v8H2zM2 13h8v8H2z" {...ln} strokeLinejoin="miter" /><path d="M1 24h10v10H1z" /><path d="M16 3h13l-5 4c8 8 7 18-6 24c7-7 8-14 3-20l-5 5z" /></svg></DockButton>
                  <DockButton aria-label="Comments"><svg width="32" height="30" fill={c.icon}><path d="M4 0h24q3 0 3 3v15q0 3-3 3H15l-8 9v-9H4q-3 0-3-3V3q0-3 3-3z" /></svg></DockButton>
                </DockGroup>
              </Dock>
              <Panels>
                <Panel $h={296}>
                  <Tabs names={['Color', 'Swatches', 'Gradients', 'Patterns']} />
                  <ColorBody>
                    <Swatches $s={40} $o={20} $mt={6}>
                      <Swatch $s={40} $back aria-label="Background" />
                      <Swatch $s={40} $ring aria-label="Foreground" />
                    </Swatches>
                    <Field><FieldRing /></Field>
                    <HueWrap><svg width="20" height="20" viewBox="0 0 20 20"><path d="M5 2h4l8 8-8 8H5q-3 0-3-3V5q0-3 3-3z" fill={c.icon} stroke="#222" strokeWidth="2" /></svg></HueWrap>
                  </ColorBody>
                </Panel>

                <Panel $h={734}>
                  <Tabs names={['Properties', 'Adjustments', 'Libraries']} />
                  <PropHead>
                    <Inset $w={48} $h={48} aria-label="Pixel layer"><svg width="28" height="24" fill={c.icon}><path d="M1 1h26v22H1z" {...ln} strokeLinejoin="miter" /><path d="M2 22v-7h4v-4h3V8h2V6h4v3h2v4h4v4h3v5z" /><path d="M20 6h4v4h-4z" /></svg></Inset>
                    Pixel Layer
                  </PropHead>
                  <PropScroll>
                    <PropList>
                      <Group $h={230}>
                        <GroupHead><Chevron s={17} />Transform</GroupHead>
                        <XForm>
                          <Inset $w={52} $h={54} aria-label="Link width and height"><svg width="18" height="30" {...ln}><path d="M6 12a6 6 0 1 1 6 0M6 18a6 6 0 1 0 6 0M9 9v12" strokeWidth="2.500" /></svg></Inset>
                          <XGrid>
                            <label htmlFor="w">W</label><NumField id="w" defaultValue="1443 px" />
                            <label htmlFor="x">X</label><NumField id="x" defaultValue="547 px" />
                            <label htmlFor="h">H</label><NumField id="h" defaultValue="1076 px" />
                            <label htmlFor="y">Y</label><NumField id="y" defaultValue="924 px" />
                          </XGrid>
                        </XForm>
                        <AngleRow>
                          <svg width="37" height="20" {...ln}><path d="M1 18L20 2M1 18h24M14 7q7 4 8 11" /></svg>
                          <ComboField id="Angle" w={121} value="0.00°" />
                          <Flip $l={54} aria-label="Flip horizontal"><svg width="32" height="28" fill={c.icon}><path d="M2 6v17l8-8z" {...ln} /><path d="M16 0v28" {...ln} strokeDasharray="2 2" strokeLinecap="butt" /><path d="M31 4v21L20 14z" /></svg></Flip>
                          <Flip $l={38} aria-label="Flip vertical"><svg width="28" height="31" fill={c.icon}><path d="M6 1h16l-8 9z" {...ln} /><path d="M0 16h28" {...ln} strokeDasharray="2 2" strokeLinecap="butt" /><path d="M5 31h18L14 20z" /></svg></Flip>
                        </AngleRow>
                      </Group>
                      <Group $h={220}>
                        <GroupHead><Chevron s={17} />Align and Distribute</GroupHead>
                        <AlignLabel>Align:</AlignLabel>
                        <AlignRow>
                          <AlignButton kind="left" /><AlignButton kind="center" /><AlignButton kind="right" />
                          <span />
                          <AlignButton kind="top" /><AlignButton kind="middle" /><AlignButton kind="bottom" />
                        </AlignRow>
                        <More aria-label="More options"><svg width="28" height="8" fill={c.icon}><circle cx="4" cy="4" r="3" /><circle cx="14" cy="4" r="3" /><circle cx="24" cy="4" r="3" /></svg></More>
                      </Group>
                      <Group><GroupHead><Chevron s={17} />Quick Actions</GroupHead></Group>
                    </PropList>
                    <PropTrack><PropThumb /></PropTrack>
                  </PropScroll>
                </Panel>

                <Panel>
                  <Tabs names={['Layers', 'Channels', 'Paths']} />
                  <FilterRow $h={64} $top={9}>
                    <KindBox>
                      <Dropdown id="kind" w={177} value="Kind" pad={42} options={['Name']} />
                      <KindIcon><Magnifier s={20} /></KindIcon>
                    </KindBox>
                    <IconSet $l={23} $gap={25}>
                      <svg width="24" height="21" fill={c.icon}><path d="M1 1h22v18H1z" {...ln} strokeLinejoin="miter" /><path d="M4 16l5-8 3 4 3-5 5 9z" /></svg>
                      <HalfCircle />
                      <svg width="24" height="24" fill={c.icon}><text x="12" y="21" textAnchor="middle" fontFamily="'DejaVu Serif', serif" fontSize="26" stroke={c.icon}>T</text></svg>
                      <svg width="24" height="24" fill={c.icon}><path d="M4 4h16v16H4z" {...ln} /><path d="M2 2h4v4H2zM18 2h4v4h-4zM2 18h4v4H2zM18 18h4v4h-4z" {...ln} fill={c.bar} /></svg>
                      <svg width="24" height="24" fill={c.icon}><path d="M8 12V2h9l5 5v14h-8" {...ln} /><path d="M16 2l6 6h-6z" /><path d="M2 12h11v11H2z" /></svg>
                    </IconSet>
                    <Toggle aria-label="Filter on or off" />
                  </FilterRow>
                  <FilterRow $h={56} $top={3}>
                    <Dropdown id="blend" w={262} value="Normal" pad={10} options={['Multiply']} />
                    <FieldLabel $w={86} htmlFor="Opacity">Opacity:</FieldLabel>
                    <ComboField id="Opacity" w={103} value="100%" />
                  </FilterRow>
                  <FilterRow $h={60} $end $bottom={5}>
                    <LockLabel>Lock:</LockLabel>
                    <IconSet $l={0} $gap={19}>
                      <svg width="22" height="22" fill="#484848"><path d="M0 0h22v22H0z" fill={c.icon} /><path d="M8 2h6v5H8zM2 7h6v7H2zM14 7h6v7h-6zM8 14h6v6H8z" /></svg>
                      <SmallBrush />
                      <Arrows s={26} />
                      <svg width="28" height="24" fill={c.icon}><path d="M5 4h14l5 6v10H5z" {...ln} /><path d="M17 4l7 7h-7z" /><path d="M4 0h2v2H4zM22 0h2v2h-2zM0 3h2v2H0zM26 3h2v2h-2zM4 22h2v2H4zM22 22h2v2h-2zM0 19h2v2H0zM26 19h2v2h-2z" /></svg>
                      <svg width="20" height="24" fill={c.icon}><path d="M5 11V6a5 5 0 0 1 10 0v5" {...ln} strokeWidth="2.5" /><path d="M2 9h16q2 0 2 2v11q0 2-2 2H2q-2 0-2-2V11q0-2 2-2zM10 13a3 3 0 1 0 .1 0z" fillRule="evenodd" /></svg>
                    </IconSet>
                    <FieldLabel $w={81} htmlFor="Fill">Fill:</FieldLabel>
                    <ComboField id="Fill" w={103} value="100%" />
                  </FilterRow>
                  <LayerList>
                    <ArtRow>
                      <button aria-label="Toggle artboard"><Eye /></button>
                      <ArtName><Chevron s={17} />Artboard 1</ArtName>
                    </ArtRow>
                    <LayerRow>
                      <EyeCell aria-label="Toggle layer"><Eye /></EyeCell>
                      <LayerCell>
                        <Thumb><svg width="72" height="72" fill="none" stroke="#fff" strokeWidth="2"><path d="M1 26V1h25M46 1h25v25M71 46v25H46M26 71H1V46" /></svg></Thumb>
                        Layer 1
                      </LayerCell>
                    </LayerRow>
                  </LayerList>
                  <LayerFoot>
                    <FootButton aria-label="Link layers"><svg width="28" height="20" fill="none" stroke="#929292" strokeWidth="2.500"><path d="M12 6a6 6 0 1 0 0 8M16 6a6 6 0 1 1 0 8M9 10h10" /></svg></FootButton>
                    <FootButton $menu><FxMark>fx</FxMark></FootButton>
                    <FootButton aria-label="Add mask"><svg width="26" height="22" fill={c.icon}><path d="M1 1h24v20H1zM13 5a6 6 0 1 0 .1 0z" fillRule="evenodd" /></svg></FootButton>
                    <FootButton $menu aria-label="Adjustment layer"><HalfCircle s={24} /></FootButton>
                    <FootButton aria-label="New group"><svg width="26" height="22" fill={c.icon}><path d="M1 0h10l2 3H1zM1 5h24v15q0 1-1 1H2q-1 0-1-1z" /></svg></FootButton>
                    <FootButton aria-label="New layer"><svg width="24" height="24" {...ln} strokeLinejoin="miter"><path d="M1 1h22v22H1zM12 7v10M7 12h10" /></svg></FootButton>
                    <FootButton aria-label="Delete"><svg width="24" height="26" {...ln}><path d="M1 5h22M8 5V1h8v4M4 5v20h16V5M9 9v12M12 9v12M15 9v12" /></svg></FootButton>
                  </LayerFoot>
                </Panel>
              </Panels>
            </SideBody>
          </Side>
        </Work>
      </Frame>

      <Behind>
        <BehindPill $bg="#cfcfcf" $b="#707070" $w={112} />
        <BehindPill $bg="#0f62c4" $b="#0b3c7c" $w={104} />
      </Behind>

      <Dialog role="dialog" aria-label="Fill">
        <DialogBar />
        <DialogBody>
          <DialogMain>
            <ContentRow>
              <label htmlFor="contents">Contents:</label>
              <Dropdown id="contents" w={290} h={40} value="Content-Aware" />
            </ContentRow>
            <Box2 $h={116} $mt={97}>
              <legend>Options</legend>
              <CheckRow $mt={34}><Check $gap={20}><Box $s={24} type="checkbox" defaultChecked />Color Adaptation</Check></CheckRow>
            </Box2>
            <Box2 $h={212} $mt={20}>
              <legend>Blending</legend>
              <FormRow $mt={16}><label htmlFor="mode">Mode:</label><Dropdown id="mode" w={270} h={40} pad={12} value="Normal" options={['Multiply']} /></FormRow>
              <FormRow $mt={18}><label htmlFor="op">Opacity:</label><OpacityInput id="op" defaultValue="100" /><Unit>%</Unit></FormRow>
              <CheckRow $mt={21}><Check $gap={20}><Box $s={24} type="checkbox" />Preserve Transparency</Check></CheckRow>
            </Box2>
          </DialogMain>
          <DialogButtons>
            <PillSlot><Pill type="button" $main>OK</Pill></PillSlot>
            <PillSlot><Pill type="button">Cancel</Pill></PillSlot>
          </DialogButtons>
        </DialogBody>
      </Dialog>

      <Menu role="menu">
        {menuItems.map((m, i) => m === '-' ? <MenuLine key={i} role="separator" /> : (
          <li key={i}>
            <Item role="menuitem" $on={m === 'Content-Aware'}>
              {m === 'Content-Aware' && <svg width="17" height="20" fill="none" stroke="#fff" strokeWidth="3" strokeLinecap="round" strokeLinejoin="round"><path d="M2 11l4 6L15 3" /></svg>}
              {m}
            </Item>
          </li>
        ))}
      </Menu>
    </Screen>
  );
}
